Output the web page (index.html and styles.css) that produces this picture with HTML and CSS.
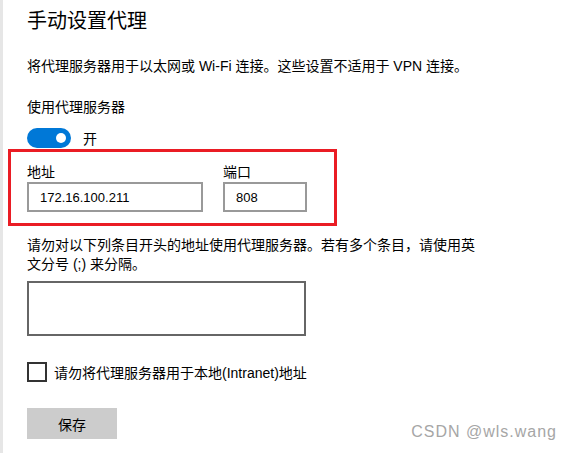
FILE: index.html
```html
<!DOCTYPE html>
<html>

<head>
    <meta charset="UTF-8" />
    <meta name="viewport" content="width=device-width, initial-scale=1.0" />
    <title>手动设置代理</title>
    <link rel="stylesheet" href="styles.css">
</head>

<body>
    <div class="page">
        <h2 class="title">手动设置代理</h2>
        <p class="desc">将代理服务器用于以太网或 Wi-Fi 连接。这些设置不适用于 VPN 连接。</p>

        <div class="label">使用代理服务器</div>
        <div class="toggle-row">
            <span class="toggle"></span>
            <span>开</span>
        </div>

        <div class="highlight">
            <div class="field address">
                <label>地址</label>
                <input type="text" value="172.16.100.211">
            </div>
            <div class="field port">
                <label>端口</label>
                <input type="text" value="808">
            </div>
        </div>

        <p class="note">请勿对以下列条目开头的地址使用代理服务器。若有多个条目，请使用英文分号 (;) 来分隔。</p>
        <textarea class="exceptions"></textarea>

        <label class="check-row">
            <span class="checkbox"></span>
            <span>请勿将代理服务器用于本地(Intranet)地址</span>
        </label>

        <button class="save">保存</button>
    </div>

    <div class="watermark">CSDN @wls.wang</div>
</body>

</html>
```

FILE: styles.css
```css
* {
    box-sizing: border-box;
    margin: 0;
    padding: 0;
}

body {
    width: 574px;
    height: 453px;
    background: #FFFFFF;
    border-left: 3px solid #e6e6e6;
    font-family: "Liberation Sans", "Noto Sans CJK SC", sans-serif;
    font-size: 14px;
    color: #000;
    position: relative;
    overflow: hidden;
}

.page {
    padding: 7px 0 0 24px;
    display: flex;
    flex-direction: column;
    align-items: flex-start;
}

.title {
    font-size: 20px;
    font-weight: normal;
    line-height: 28px;
}

.desc {
    margin-top: 21px;
    line-height: 20px;
}

.label {
    margin-top: 21px;
    line-height: 20px;
}

.toggle-row {
    margin-top: 11px;
    height: 20px;
    display: flex;
    align-items: center;
    gap: 12px;
}

.toggle {
    position: relative;
    width: 44px;
    height: 20px;
    border-radius: 10px;
    background-color: #0078d7;
}

.toggle::after {
    content: "";
    position: absolute;
    top: 5px;
    right: 5px;
    width: 10px;
    height: 10px;
    border-radius: 50%;
    background: #FFFFFF;
}

.highlight {
    margin: 1px 0 0 -19px;
    width: 329px;
    height: 77px;
    border: 3px solid #ea1c24;
    padding: 11px 0 0 16px;
    display: flex;
    gap: 20px;
}

.field label {
    display: block;
    line-height: 18px;
    margin-bottom: 1px;
}

.field input {
    display: block;
    height: 30px;
    border: 2px solid #999;
    padding: 0 0 0 11px;
    font-family: "Liberation Sans", sans-serif;
    font-size: 13px;
    color: #000;
    outline: none;
}

.address input {
    width: 176px;
}

.port input {
    width: 84px;
}

.note {
    margin-top: 10px;
    width: 452px;
    line-height: 19px;
}

.exceptions {
    margin-top: 7px;
    width: 279px;
    height: 55px;
    border: 2px solid #666;
    resize: none;
    outline: none;
}

.check-row {
    margin-top: 26px;
    height: 20px;
    display: flex;
    align-items: center;
    gap: 7px;
}

.checkbox {
    width: 20px;
    height: 20px;
    border: 2px solid #333;
}

.save {
    margin-top: 26px;
    width: 90px;
    height: 31px;
    border: none;
    background-color: #cccccc;
    font-family: "Liberation Sans", "Noto Sans CJK SC", sans-serif;
    font-size: 14px;
    color: #000;
}

.watermark {
    position: absolute;
    right: 17px;
    top: 423px;
    font-family: "Liberation Sans", sans-serif;
    font-size: 16px;
    letter-spacing: 1px;
    color: #a6a6a6;
}
```
